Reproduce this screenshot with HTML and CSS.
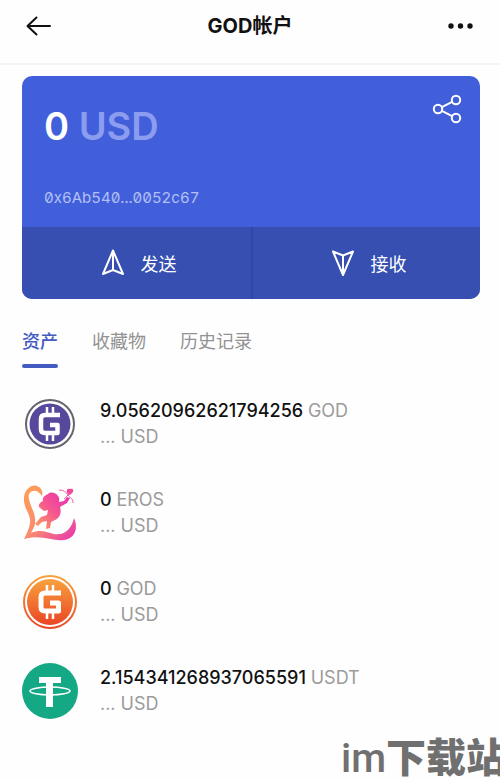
FILE: index.html
```
<!DOCTYPE html>
<html lang="zh-CN">
<head>
    <meta charset="UTF-8">
    <meta name="viewport" content="width=device-width, initial-scale=1">
    <title>GOD帐户</title>
    <link rel="stylesheet" href="styles.css">
</head>
<body>
    <header class="topbar">
        <button class="icon-btn" aria-label="返回">
            <svg width="26" height="20" viewBox="0 0 26 20" fill="none" stroke="#111" stroke-width="2" stroke-linecap="round" stroke-linejoin="round">
                <path d="M24 10H1.500M10.500 1.500L1.500 10l9 8.500"/>
            </svg>
        </button>
        <h1 class="title">GOD帐户</h1>
        <button class="icon-btn" aria-label="更多">
            <svg width="26" height="20" viewBox="0 0 26 20" fill="#111">
                <circle cx="3" cy="10" r="2.700"/>
                <circle cx="12.500" cy="10" r="2.700"/>
                <circle cx="22" cy="10" r="2.700"/>
            </svg>
        </button>
    </header>

    <main class="content">
        <section class="card">
            <div class="card-main">
                <div>
                    <p class="balance">0 <span class="balance-unit">USD</span></p>
                    <p class="address">0x6Ab540...0052c67</p>
                </div>
                <button class="icon-btn share" aria-label="分享">
                    <svg width="30" height="30" viewBox="0 0 30 30" fill="none" stroke="#fff" stroke-width="2">
                        <circle cx="6" cy="15" r="4.200"/>
                        <circle cx="24" cy="6" r="4.200"/>
                        <circle cx="24" cy="24" r="4.200"/>
                        <path d="M9.800 13.100l10.400-5.200M9.800 16.900l10.400 5.200"/>
                    </svg>
                </button>
            </div>
            <div class="actions">
                <button class="action">
                    <svg width="24" height="28" viewBox="0 0 24 28" fill="none" stroke="#fff" stroke-width="2" stroke-linejoin="round">
                        <path d="M12 1.500L2 25l10-4 10 4zM12 2v19"/>
                    </svg>
                    发送
                </button>
                <button class="action">
                    <svg width="24" height="28" viewBox="0 0 24 28" fill="none" stroke="#fff" stroke-width="2" stroke-linejoin="round">
                        <path d="M12 26L2 2.500l10 4 10-4zM12 26V6.500"/>
                    </svg>
                    接收
                </button>
            </div>
        </section>

        <nav class="tabs">
            <a href="#assets" class="tab active">资产</a>
            <a href="#collectibles" class="tab">收藏物</a>
            <a href="#history" class="tab">历史记录</a>
        </nav>

        <ul class="assets" id="assets">
            <li class="asset">
                <svg class="asset-icon" viewBox="0 0 56 56">
                    <circle cx="28" cy="28" r="24" fill="#fff" stroke="#66646f" stroke-width="2"/>
                    <circle cx="28" cy="28" r="20.500" fill="#57489c"/>
                    <path d="M38 19H23q-4 0-4 4v10q0 4 4 4h12.500v-8H28" fill="none" stroke="#fff" stroke-width="4.500" stroke-linejoin="round"/>
                    <path d="M25 11v7M31 11v7M25 38v7M31 38v7" stroke="#fff" stroke-width="2.500"/>
                </svg>
                <div>
                    <p class="amount">9.05620962621794256 <span class="muted">GOD</span></p>
                    <p class="muted">... USD</p>
                </div>
            </li>
            <li class="asset">
                <svg class="asset-icon" viewBox="0 0 56 56">
                    <defs>
                        <linearGradient id="heart" x1="0" y1="0" x2="1" y2="1">
                            <stop offset="0" stop-color="#ffa052"/>
                            <stop offset="0.5" stop-color="#fa8b70"/>
                            <stop offset="1" stop-color="#e633b0"/>
                        </linearGradient>
                        <linearGradient id="cupid" x1="1" y1="0" x2="0" y2="1">
                            <stop offset="0" stop-color="#e52eb5"/>
                            <stop offset="0.5" stop-color="#f5568f"/>
                            <stop offset="1" stop-color="#ffa35c"/>
                        </linearGradient>
                    </defs>
                    <path fill="url(#heart)" d="M2 54C5 48 9 40 8 34 7 27 1 22 2 12 3 4 10-1 15 1c5 2 6 6 5 10-4-6-10-7-13-2-2 6 5 16 6 24 1 7-2 11-4 15 9-4 15-1 23 1 12 2 18-7 20-16 5 11 0 21-10 22-10 2-22-6-40-1z"/>
                    <path fill="url(#cupid)" d="M21 16c-1-3 2-6 5-7 3-3 8-1 10 2 2 2 1 5 1 6l5-1 3-4 3 1-3 5-7 4c2 7-1 11-5 13l-4 2-1 6-4 1 1-8-5 1-4 4-3-2 6-7 6-2 1-5-4 1-5-4c-1-3 2-5 4-6z"/>
                    <path fill="none" stroke="#eb629f" stroke-width="1" d="M37 5c5 0 7 2 9 5s5 3 5 8M42 14l7-7"/>
                    <path fill="#ee499b" d="M45 8c-1-4 1-5 3-4 2-1 4 0 3 3l-3 3z"/>
                </svg>
                <div>
                    <p class="amount">0 <span class="muted">EROS</span></p>
                    <p class="muted">... USD</p>
                </div>
            </li>
            <li class="asset">
                <svg class="asset-icon" viewBox="0 0 56 56">
                    <defs>
                        <linearGradient id="orange" x1="0" y1="0" x2="0" y2="1">
                            <stop offset="0" stop-color="#f8a13d"/>
                            <stop offset="1" stop-color="#ea4625"/>
                        </linearGradient>
                    </defs>
                    <circle cx="28" cy="28" r="26" fill="#fff" stroke="url(#orange)" stroke-width="2"/>
                    <circle cx="28" cy="28" r="23" fill="url(#orange)"/>
                    <path d="M39 19H23q-4 0-4 4v10q0 4 4 4h13.500v-8H28" fill="none" stroke="#fff" stroke-width="5" stroke-linejoin="round"/>
                    <path d="M25 11v7M31 11v7M25 38v7M31 38v7" stroke="#fff" stroke-width="2.500"/>
                </svg>
                <div>
                    <p class="amount">0 <span class="muted">GOD</span></p>
                    <p class="muted">... USD</p>
                </div>
            </li>
            <li class="asset">
                <svg class="asset-icon" viewBox="0 0 56 56">
                    <circle cx="28" cy="28" r="28" fill="#14a885"/>
                    <path d="M17 14h22v6h-8v24h-7V20h-7z" fill="#fff"/>
                    <ellipse cx="28" cy="28" rx="20" ry="4" fill="none" stroke="#fff" stroke-width="1.500"/>
                    <path d="M24 20h7v10h-7z" fill="#fff"/>
                </svg>
                <div>
                    <p class="amount">2.154341268937065591 <span class="muted">USDT</span></p>
                    <p class="muted">... USD</p>
                </div>
            </li>
        </ul>
    </main>

    <div class="watermark"><span class="watermark-latin">im</span>下载站</div>
</body>
</html>
```
FILE: styles.css
```
* {
    box-sizing: border-box;
}

body {
    margin: 0;
    min-height: 100vh;
    background-color: #fefefe;
    color: #111;
    font-family: Inter, "Noto Sans CJK SC", sans-serif;
    font-size: 18px;
    position: relative;
    overflow: hidden;
}

h1, p, ul {
    margin: 0;
    padding: 0;
}

button {
    border: none;
    background: none;
    padding: 0;
    color: inherit;
    font: inherit;
    cursor: pointer;
}

svg {
    display: block;
}

.topbar {
    display: flex;
    align-items: center;
    justify-content: space-between;
    height: 65px;
    padding: 0 26px 12px;
    border-bottom: 2px solid #f4f4f4;
}

.title {
    font-size: 20px;
    line-height: 28px;
    font-weight: 700;
}

.content {
    padding: 11px 20px 0 22px;
}

.card {
    border-radius: 10px;
    overflow: hidden;
    background-color: #425fdb;
    color: #fff;
}

.card-main {
    display: flex;
    justify-content: space-between;
    align-items: flex-start;
    padding: 26px 18px 17px 22px;
}

.balance {
    font-size: 38px;
    line-height: 48px;
    font-weight: 600;
}

.balance-unit {
    color: #8c9df0;
}

.address {
    margin-top: 36px;
    color: #b3c0f5;
    font-size: 15px;
    line-height: 24px;
    font-feature-settings: "zero", "tnum";
}

.share {
    margin-top: -8px;
}

.actions {
    display: grid;
    grid-template-columns: 1fr 1fr;
    background-color: #364fb1;
}

.action {
    display: flex;
    align-items: center;
    justify-content: center;
    gap: 16px;
    height: 72px;
    padding-left: 4px;
}

.action + .action {
    border-left: 2px solid #3047a5;
}

.tabs {
    display: flex;
    gap: 34px;
    margin-top: 29px;
}

.tab {
    color: #929292;
    line-height: 28px;
    text-decoration: none;
}

.tab.active {
    color: #435bc0;
    font-weight: 500;
}

.tab.active::after {
    content: "";
    display: block;
    height: 4px;
    margin-top: 8px;
    border-radius: 2px;
    background-color: #435bc0;
}

.assets {
    margin-top: 28px;
    list-style: none;
}

.asset {
    display: flex;
    align-items: center;
    gap: 22px;
    height: 56px;
    margin-bottom: 33px;
    line-height: 26px;
}

.asset:last-child {
    margin-bottom: 0;
}

.asset-icon {
    width: 56px;
    height: 56px;
}

.amount {
    font-weight: 500;
}

.muted {
    color: #9b9b9b;
    font-weight: 400;
}

.watermark {
    position: absolute;
    right: -6px;
    bottom: -10px;
    color: #707070;
    font-family: "Noto Sans CJK SC", sans-serif;
    font-size: 40px;
    line-height: 60px;
    font-weight: 900;
    white-space: nowrap;
}

.watermark-latin {
    font-family: Roboto, sans-serif;
    font-size: 40px;
    font-weight: 500;
}
```
